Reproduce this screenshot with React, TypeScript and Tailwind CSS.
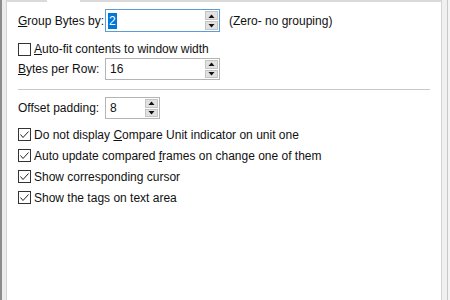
import React from 'react';

const font = { fontFamily: '"Liberation Sans", Arial, sans-serif' };

function Spinner({ width }: { width: string }) {
  return (
    <div className={`flex flex-col ${width} h-full gap-[1px] p-[1px] bg-white shrink-0`}>
      <div className="flex-1 flex items-center justify-center bg-[#e1e1e1] border border-[#c4c4c4]">
        <svg width="7" height="4" viewBox="0 0 7 4"><path d="M0.5 4 L3.5 0.5 L6.5 4 Z" fill="#111" /></svg>
      </div>
      <div className="flex-1 flex items-center justify-center bg-[#e1e1e1] border border-[#c4c4c4]">
        <svg width="7" height="4" viewBox="0 0 7 4"><path d="M0.5 0 L3.5 3.5 L6.5 0 Z" fill="#111" /></svg>
      </div>
    </div>
  );
}

function NumberBox({ value, focused, wide }: { value: string; focused?: boolean; wide?: boolean }) {
  return (
    <div
      className={`flex shrink-0 h-full ${wide ? 'w-[115px]' : 'w-[55px]'} border ${focused ? 'border-[#5a9bd8]' : 'border-[#b4b4b4]'} bg-white`}
    >
      <div className="flex-1 flex items-center pl-[2px]">
        {focused ? (
          <span className="bg-[#0078d7] text-white px-[1px] leading-[16px]">{value}</span>
        ) : (
          <span className="pl-[2px]">{value}</span>
        )}
      </div>
      <Spinner width="w-[15px]" />
    </div>
  );
}

function Check({ checked }: { checked?: boolean }) {
  return (
    <div className="w-[13px] h-[13px] border border-[#333] bg-white flex items-center justify-center shrink-0">
      {checked && (
        <svg width="11" height="11" viewBox="0 0 11 11">
          <polyline points="1.5,5.5 4,8.5 9.5,2.5" fill="none" stroke="#222" strokeWidth="1" />
        </svg>
      )}
    </div>
  );
}

function CheckRow({ checked, children }: { checked?: boolean; children: React.ReactNode }) {
  return (
    <div className="flex items-center gap-[3px] h-[21px]">
      <Check checked={checked} />
      <span className="whitespace-nowrap">{children}</span>
    </div>
  );
}

export default function App() {
  return (
    <div className="w-[450px] h-[300px] flex bg-white text-[12px] text-[#111] overflow-hidden" style={font}>
      {/* left frame */}
      <div className="flex w-[7px] h-full shrink-0">
        <div className="w-[2px] bg-[#8c8c8c]" />
        <div className="w-[4px] bg-[#ececec]" />
        <div className="w-[1px] bg-[#d4d4d4]" />
      </div>

      {/* tab page */}
      <div className="flex-1 flex flex-col">
        <div className="flex h-[2px]">
          <div className="w-[40px] bg-[#dadada]" />
          <div className="w-[33px]" />
          <div className="flex-1 bg-[#dadada]" />
        </div>

        <div className="flex flex-col pl-[11px]">
          <div className="flex items-center h-[23px] mt-[7px]">
            <span className="w-[87px] shrink-0 whitespace-nowrap"><u>G</u>roup Bytes by:</span>
            <NumberBox value="2" focused wide />
            <span className="ml-[9px] whitespace-nowrap">(Zero- no grouping)</span>
          </div>

          <div className="flex items-center gap-[3px] h-[14px] mt-[10px]">
            <Check />
            <span className="whitespace-nowrap"><u>A</u>uto-fit contents to window width</span>
          </div>

          <div className="flex items-center h-[22px] mt-[2px]">
            <span className="w-[87px] shrink-0 whitespace-nowrap"><u>B</u>ytes per Row:</span>
            <NumberBox value="16" wide />
          </div>

          <div className="h-[1px] w-[412px] bg-[#c8c8c8] mt-[9px]" />

          <div className="flex items-center h-[22px] mt-[7px]">
            <span className="w-[87px] shrink-0 whitespace-nowrap">Offset padding:</span>
            <NumberBox value="8" />
          </div>

          <div className="flex flex-col mt-[5px]">
            <CheckRow checked>Do not display <u>C</u>ompare Unit indicator on unit one</CheckRow>
            <CheckRow checked>Auto update compared <u>f</u>rames on change one of them</CheckRow>
            <CheckRow checked>Show corresponding cursor</CheckRow>
            <CheckRow checked>Show the tags on text area</CheckRow>
          </div>
        </div>
      </div>

      {/* right frame */}
      <div className="flex w-[9px] h-full shrink-0">
        <div className="w-[1px] bg-[#d4d4d4]" />
        <div className="w-[5px] bg-[#f0f0f0]" />
        <div className="w-[1px] bg-[#c8c8c8]" />
        <div className="w-[2px] bg-[#f4f4f4]" />
      </div>
    </div>
  );
}
